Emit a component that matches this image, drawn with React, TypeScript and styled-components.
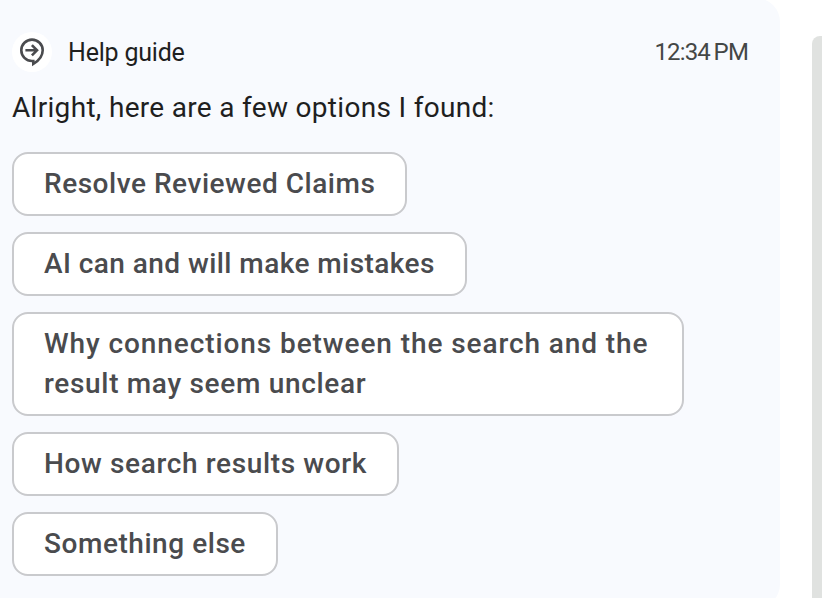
import React, { FC } from 'react';
import styled, { createGlobalStyle } from 'styled-components';

type Option = {
  label: string;
  tracking: number;
  firstLineTracking?: number;
};

const options: Option[] = [
  { label: 'Resolve Reviewed Claims', tracking: 0.53 },
  { label: 'AI can and will make mistakes', tracking: 0.44 },
  {
    label: 'Why connections between the search and the result may seem unclear',
    tracking: 0.68,
    firstLineTracking: 0.91,
  },
  { label: 'How search results work', tracking: 0.64 },
  { label: 'Something else', tracking: 0.55 },
];

const GuideIcon: FC = () => (
  <svg width="26" height="30" viewBox="0 0 26 30" fill="none">
    <path
      d="M14.3 24H13A10.7 10.7 0 1 1 23.7 13.3C23.7 18.6 20 23.6 14.3 27V24Z"
      stroke="#4a4b4e"
      strokeWidth="2.6"
    />
    <path
      d="M6.4 13.3H18M12.9 8.2L18 13.3L12.9 18.4"
      stroke="#4a4b4e"
      strokeWidth="2.6"
    />
  </svg>
);

const App: FC = () => (
  <>
    <GlobalStyle />
    <Page>
      <Panel>
        <Header>
          <Avatar>
            <GuideIcon />
          </Avatar>
          <Sender>Help guide</Sender>
          <Time>12:34 PM</Time>
        </Header>
        <Message>Alright, here are a few options I found:</Message>
        <Options>
          {options.map(({ label, tracking, firstLineTracking }) => (
            <OptionButton
              key={label}
              $tracking={tracking}
              $firstLineTracking={firstLineTracking ?? tracking}
            >
              {label}
            </OptionButton>
          ))}
        </Options>
      </Panel>
      <Scrollbar />
    </Page>
  </>
);

const GlobalStyle = createGlobalStyle`
  * {
    box-sizing: border-box;
  }

  body {
    margin: 0;
    overflow: hidden;
    background: #fff;
    font-family: Roboto, 'Liberation Sans', sans-serif;
  }
`;

const Page = styled.main`
  display: flex;
  justify-content: space-between;
  height: 598px;
  overflow: hidden;
`;

const Panel = styled.section`
  width: 780px;
  height: 610px;
  margin-top: -2px;
  padding: 34px 32px 0 12px;
  border-radius: 0 24px 24px 0;
  background: #f8fafe;
`;

const Header = styled.header`
  display: flex;
  align-items: center;
  height: 40px;
  color: #1f1f1f;
`;

const Avatar = styled.div`
  display: flex;
  align-items: center;
  justify-content: center;
  width: 40px;
  height: 40px;
  border-radius: 50%;
  background: #fff;
`;

const Sender = styled.span`
  margin-left: 16px;
  padding-top: 2px;
  font-size: 25px;
  line-height: 40px;
  letter-spacing: -0.2px;
`;

const Time = styled.time`
  margin-left: auto;
  color: #444746;
  font-size: 24px;
  line-height: 40px;
  letter-spacing: -0.85px;
  word-spacing: -1.5px;
`;

const Message = styled.p`
  margin: 16px 0 24px;
  color: #1f1f1f;
  font-size: 28px;
  line-height: 40px;
  letter-spacing: 0.31px;
  white-space: nowrap;
`;

const Options = styled.div`
  display: flex;
  flex-direction: column;
  align-items: flex-start;
  gap: 16px;
`;

const OptionButton = styled.button<{
  $tracking: number;
  $firstLineTracking: number;
}>`
  max-width: 672px;
  padding: 10px 30px;
  border: 2px solid #c9cacd;
  border-radius: 16px;
  background: #fff;
  color: #4a4b4e;
  font-family: inherit;
  font-size: 28px;
  font-weight: 500;
  line-height: 40px;
  letter-spacing: ${({ $tracking }) => $tracking}px;
  text-align: left;
  cursor: pointer;

  &::first-line {
    letter-spacing: ${({ $firstLineTracking }) => $firstLineTracking}px;
  }
`;

const Scrollbar = styled.div`
  width: 10px;
  height: 600px;
  margin-top: 36px;
  border-radius: 8px 0 0 0;
  background: #e0e2e0;
`;

export default App;
